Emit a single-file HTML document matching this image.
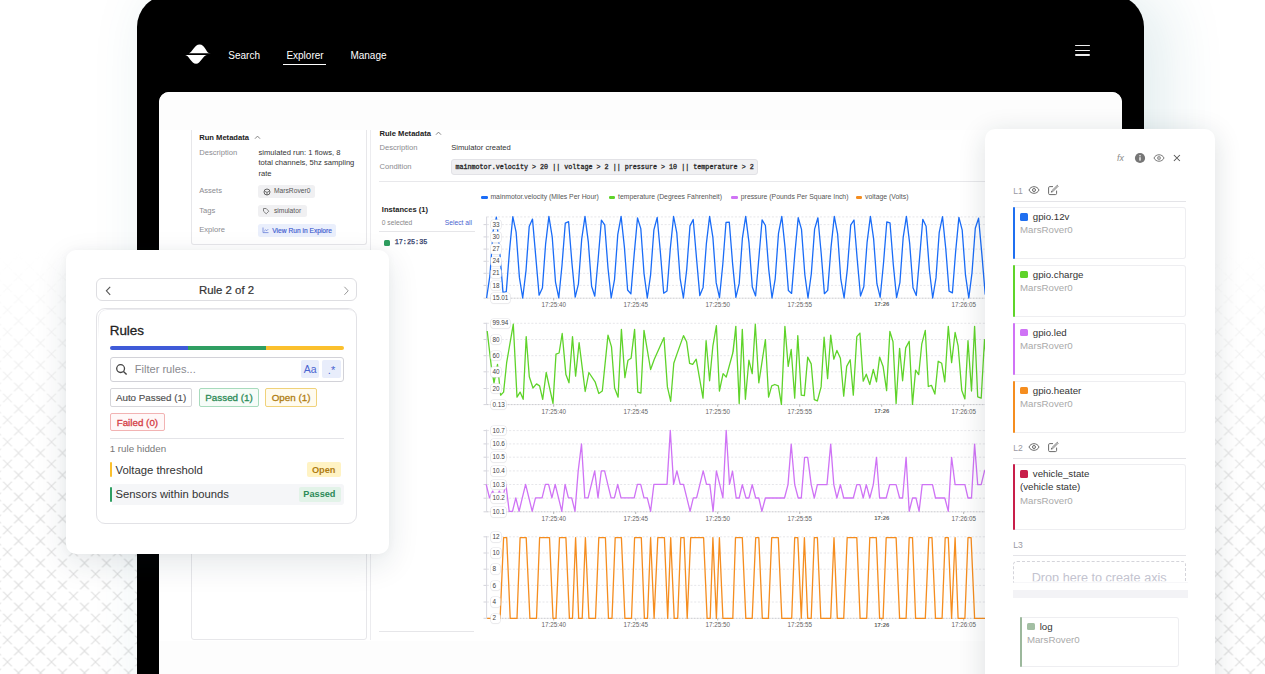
<!DOCTYPE html><html><head><meta charset="utf-8"><style>
html,body{margin:0;padding:0;}
body{width:1265px;height:674px;overflow:hidden;position:relative;background:#fff;font-family:'Liberation Sans',sans-serif;}
.t{position:absolute;white-space:pre;}
.r{position:absolute;box-sizing:border-box;}
svg{position:absolute;overflow:visible;}
</style></head><body>
<svg width="1265" height="674" style="left:0;top:0">
<defs>
<pattern id="xp" x="18.5" y="13" width="22" height="22" patternUnits="userSpaceOnUse">
<g stroke="#e2e2e2" stroke-width="1.25" fill="none">
<path d="M-4.4,-4.4 L4.4,4.4 M-4.4,4.4 L4.4,-4.4"/>
<path d="M17.6,-4.4 L26.4,4.4 M17.6,4.4 L26.4,-4.4"/>
<path d="M-4.4,17.6 L4.4,26.4 M-4.4,26.4 L4.4,17.6"/>
<path d="M17.6,17.6 L26.4,26.4 M17.6,26.4 L26.4,17.6"/>
<path d="M6.6,6.6 L15.4,15.4 M6.6,15.4 L15.4,6.6"/>
</g></pattern>
<linearGradient id="fadeL" x1="0" y1="0" x2="0" y2="1">
<stop offset="0.37" stop-color="#fff" stop-opacity="0"/><stop offset="0.74" stop-color="#fff" stop-opacity="1"/></linearGradient>
<mask id="mk"><rect width="1265" height="674" fill="url(#fadeL)"/></mask>
</defs>
<rect width="1265" height="674" fill="url(#xp)" mask="url(#mk)"/>
</svg>
<div class="r" style="left:137.00px;top:-5.00px;width:1007.00px;height:725.00px;background:#000;border-radius:32px;box-shadow:18px 0 64px rgba(30,115,130,0.14);"></div>
<svg width="30" height="24" style="left:183px;top:42px" viewBox="0 0 30 24">
<path d="M5.8,11.2 C9.2,10.8 11.2,2.4 16.7,2.4 C21.6,2.4 23.4,10.3 25.8,10.9 L27.8,11.2 Z" fill="#fff"/>
<path d="M2.2,13 C5.6,13 8.4,21.8 13.1,21.8 C17.5,21.8 20,13.3 23.8,13 Z" fill="#fff"/>
</svg>
<div class="t" style="left:228.30px;top:50.83px;font-size:10px;line-height:10px;color:#fff;font-weight:400;font-family:'Liberation Sans', sans-serif;">Search</div>
<div class="t" style="left:286.40px;top:50.83px;font-size:10px;line-height:10px;color:#fff;font-weight:400;font-family:'Liberation Sans', sans-serif;">Explorer</div>
<div class="r" style="left:283.00px;top:63.80px;width:42.70px;height:1.20px;background:#fff;"></div>
<div class="t" style="left:350.40px;top:50.83px;font-size:10px;line-height:10px;color:#fff;font-weight:400;font-family:'Liberation Sans', sans-serif;">Manage</div>
<div class="r" style="left:1075.00px;top:44.70px;width:15.00px;height:1.50px;background:#eee;border-radius:1px;"></div>
<div class="r" style="left:1075.00px;top:49.60px;width:15.00px;height:1.50px;background:#eee;border-radius:1px;"></div>
<div class="r" style="left:1075.00px;top:54.30px;width:15.00px;height:1.50px;background:#eee;border-radius:1px;"></div>
<div class="r" style="left:159.00px;top:91.60px;width:963.00px;height:668.40px;background:#fff;border-radius:10px;overflow:hidden;"></div>
<div class="r" style="left:159.00px;top:91.60px;width:963.00px;height:38.60px;background:#fdfdfd;border-radius:10px 10px 0 0;"></div>
<div class="r" style="left:159.00px;top:640.60px;width:963.00px;height:39.40px;background:#fdfdfd;"></div>
<div class="r" style="left:190.50px;top:130.20px;width:176.30px;height:115.30px;border:1px solid #e7e7ea;border-top:none;border-radius:0 0 3px 3px;"></div>
<div class="t" style="left:199.20px;top:133.67px;font-size:7.6px;line-height:7.6px;color:#222;font-weight:700;font-family:'Liberation Sans', sans-serif;">Run Metadata</div>
<svg width="8" height="6" style="left:253.6px;top:133.6px"><path d="M1,4.7 L3.5,2.1 L6,4.7" stroke="#777" stroke-width="0.9" fill="none"/></svg>
<div class="t" style="left:199.20px;top:148.87px;font-size:7.6px;line-height:7.6px;color:#8b8b90;font-weight:400;font-family:'Liberation Sans', sans-serif;">Description</div>
<div class="t" style="left:258.50px;top:148.87px;font-size:7.6px;line-height:7.6px;color:#333;font-weight:400;font-family:'Liberation Sans', sans-serif;">simulated run: 1 flows, 8</div>
<div class="t" style="left:258.50px;top:159.37px;font-size:7.6px;line-height:7.6px;color:#333;font-weight:400;font-family:'Liberation Sans', sans-serif;">total channels, 5hz sampling</div>
<div class="t" style="left:258.50px;top:169.87px;font-size:7.6px;line-height:7.6px;color:#333;font-weight:400;font-family:'Liberation Sans', sans-serif;">rate</div>
<div class="t" style="left:199.20px;top:187.17px;font-size:7.6px;line-height:7.6px;color:#8b8b90;font-weight:400;font-family:'Liberation Sans', sans-serif;">Assets</div>
<div class="t" style="left:199.20px;top:206.67px;font-size:7.6px;line-height:7.6px;color:#8b8b90;font-weight:400;font-family:'Liberation Sans', sans-serif;">Tags</div>
<div class="t" style="left:199.20px;top:226.27px;font-size:7.6px;line-height:7.6px;color:#8b8b90;font-weight:400;font-family:'Liberation Sans', sans-serif;">Explore</div>
<div class="r" style="left:258.20px;top:185.20px;width:56.80px;height:12.40px;background:#f0f0f2;border-radius:2.5px;"></div>
<svg width="8" height="8" style="left:262.6px;top:187.5px"><circle cx="4" cy="4" r="3" stroke="#555" stroke-width="0.9" fill="none"/><path d="M1.6,3.2 L4,4.4 L6.4,3.2 M4,4.4 L4,7" stroke="#555" stroke-width="0.8" fill="none"/></svg>
<div class="t" style="left:274.00px;top:188.33px;font-size:6.7px;line-height:6.7px;color:#555;font-weight:400;font-family:'Liberation Sans', sans-serif;">MarsRover0</div>
<div class="r" style="left:258.20px;top:204.60px;width:48.80px;height:12.60px;background:#f0f0f2;border-radius:2.5px;"></div>
<svg width="8" height="8" style="left:262px;top:207px"><path d="M1.5,1.5 L4.2,1.5 L6.8,4.2 L4.2,6.8 L1.5,4.2 Z" stroke="#666" stroke-width="0.8" fill="none" stroke-linejoin="round"/></svg>
<div class="t" style="left:274.00px;top:207.83px;font-size:6.7px;line-height:6.7px;color:#555;font-weight:400;font-family:'Liberation Sans', sans-serif;">simulator</div>
<div class="r" style="left:258.20px;top:224.20px;width:78.20px;height:12.60px;background:#eaeffc;border-radius:2.5px;"></div>
<svg width="8" height="8" style="left:261.5px;top:226px"><path d="M1,1.5 L1,6.6 L6.5,6.6 M2.2,5.2 L3.6,3.8 L4.6,4.8 L6.2,3.2" stroke="#6a80d8" stroke-width="0.8" fill="none"/></svg>
<div class="t" style="left:272.30px;top:227.97px;font-size:6.65px;line-height:6.65px;color:#3d5bd0;font-weight:400;font-family:'Liberation Sans', sans-serif;-webkit-text-stroke:0.15px #3d5bd0;">View Run in Explore</div>
<div class="r" style="left:190.50px;top:250.00px;width:176.30px;height:390.00px;border:1px solid #e7e7ea;border-radius:3px;"></div>
<div class="r" style="left:370.00px;top:130.20px;width:1.00px;height:509.80px;background:#ececef;"></div>
<div class="t" style="left:379.50px;top:129.87px;font-size:7.6px;line-height:7.6px;color:#222;font-weight:700;font-family:'Liberation Sans', sans-serif;">Rule Metadata</div>
<svg width="8" height="6" style="left:435px;top:129.6px"><path d="M1,4.7 L3.5,2.1 L6,4.7" stroke="#777" stroke-width="0.9" fill="none"/></svg>
<div class="t" style="left:379.50px;top:144.07px;font-size:7.6px;line-height:7.6px;color:#8b8b90;font-weight:400;font-family:'Liberation Sans', sans-serif;">Description</div>
<div class="t" style="left:451.30px;top:144.07px;font-size:7.6px;line-height:7.6px;color:#333;font-weight:400;font-family:'Liberation Sans', sans-serif;">Simulator created</div>
<div class="t" style="left:379.50px;top:163.47px;font-size:7.6px;line-height:7.6px;color:#8b8b90;font-weight:400;font-family:'Liberation Sans', sans-serif;">Condition</div>
<div class="r" style="left:451.30px;top:159.00px;width:306.80px;height:15.80px;background:#f0f0f2;border:1px solid #e2e2e6;border-radius:3px;"></div>
<div class="t" style="left:455.40px;top:164.01px;font-size:6.72px;line-height:6.72px;color:#2a2a2a;font-weight:400;font-family:'Liberation Mono', monospace;-webkit-text-stroke:0.3px #2a2a2a;">mainmotor.velocity &gt; 20 || voltage &gt; 2 || pressure &gt; 10 || temperature &gt; 2</div>
<div class="r" style="left:379.00px;top:181.20px;width:743.00px;height:1.20px;background:#e8e8eb;"></div>
<div class="r" style="left:480.80px;top:196.20px;width:6.80px;height:2.40px;background:#1a6cf7;border-radius:1.2px;"></div>
<div class="t" style="left:490.40px;top:194.10px;font-size:6.85px;line-height:6.85px;color:#555;font-weight:400;font-family:'Liberation Sans', sans-serif;">mainmotor.velocity (Miles Per Hour)</div>
<div class="r" style="left:608.50px;top:196.20px;width:6.80px;height:2.40px;background:#5fd32a;border-radius:1.2px;"></div>
<div class="t" style="left:618.10px;top:194.10px;font-size:6.85px;line-height:6.85px;color:#555;font-weight:400;font-family:'Liberation Sans', sans-serif;">temperature (Degrees Fahrenheit)</div>
<div class="r" style="left:731.20px;top:196.20px;width:6.80px;height:2.40px;background:#cf73f5;border-radius:1.2px;"></div>
<div class="t" style="left:740.80px;top:194.10px;font-size:6.85px;line-height:6.85px;color:#555;font-weight:400;font-family:'Liberation Sans', sans-serif;">pressure (Pounds Per Square Inch)</div>
<div class="r" style="left:855.50px;top:196.20px;width:6.80px;height:2.40px;background:#f58d1f;border-radius:1.2px;"></div>
<div class="t" style="left:865.10px;top:194.10px;font-size:6.85px;line-height:6.85px;color:#555;font-weight:400;font-family:'Liberation Sans', sans-serif;">voltage (Volts)</div>
<div class="t" style="left:381.80px;top:205.90px;font-size:7.56px;line-height:7.56px;color:#222;font-weight:700;font-family:'Liberation Sans', sans-serif;">Instances (1)</div>
<div class="t" style="left:381.80px;top:219.93px;font-size:6.7px;line-height:6.7px;color:#888;font-weight:400;font-family:'Liberation Sans', sans-serif;">0 selected</div>
<div class="t" style="right:793.00px;top:219.93px;font-size:6.7px;line-height:6.7px;color:#4a64d0;font-weight:400;font-family:'Liberation Sans', sans-serif;">Select all</div>
<div class="r" style="left:379.00px;top:231.20px;width:95.50px;height:1.00px;background:#e6e6e9;"></div>
<div class="r" style="left:383.70px;top:239.80px;width:6.30px;height:6.10px;background:#2f9e5f;border-radius:1.5px;"></div>
<div class="t" style="left:394.70px;top:239.45px;font-size:6.8px;line-height:6.8px;color:#2b3866;font-weight:400;font-family:'Liberation Mono', monospace;-webkit-text-stroke:0.25px #2b3866;">17:25:35</div>
<div class="r" style="left:379.40px;top:630.80px;width:95.10px;height:1.00px;background:#e6e6e9;"></div>
<svg width="1265" height="674" style="left:0;top:0"><line x1="487" y1="216.9" x2="1000" y2="216.9" stroke="#e0e0e4" stroke-width="0.8" stroke-dasharray="2,1.7"/><line x1="487" y1="224.6" x2="1000" y2="224.6" stroke="#e0e0e4" stroke-width="0.8" stroke-dasharray="2,1.7"/><line x1="483.5" y1="224.6" x2="486.6" y2="224.6" stroke="#c8c8d0" stroke-width="0.8"/><line x1="487" y1="236.9" x2="1000" y2="236.9" stroke="#e0e0e4" stroke-width="0.8" stroke-dasharray="2,1.7"/><line x1="483.5" y1="236.9" x2="486.6" y2="236.9" stroke="#c8c8d0" stroke-width="0.8"/><line x1="487" y1="249.1" x2="1000" y2="249.1" stroke="#e0e0e4" stroke-width="0.8" stroke-dasharray="2,1.7"/><line x1="483.5" y1="249.1" x2="486.6" y2="249.1" stroke="#c8c8d0" stroke-width="0.8"/><line x1="487" y1="261.3" x2="1000" y2="261.3" stroke="#e0e0e4" stroke-width="0.8" stroke-dasharray="2,1.7"/><line x1="483.5" y1="261.3" x2="486.6" y2="261.3" stroke="#c8c8d0" stroke-width="0.8"/><line x1="487" y1="273.3" x2="1000" y2="273.3" stroke="#e0e0e4" stroke-width="0.8" stroke-dasharray="2,1.7"/><line x1="483.5" y1="273.3" x2="486.6" y2="273.3" stroke="#c8c8d0" stroke-width="0.8"/><line x1="487" y1="285.4" x2="1000" y2="285.4" stroke="#e0e0e4" stroke-width="0.8" stroke-dasharray="2,1.7"/><line x1="483.5" y1="285.4" x2="486.6" y2="285.4" stroke="#c8c8d0" stroke-width="0.8"/><line x1="486.6" y1="298.2" x2="1000" y2="298.2" stroke="#c4c4c8" stroke-width="0.9" stroke-dasharray="2,1"/><line x1="483.5" y1="298.2" x2="486.6" y2="298.2" stroke="#c8c8d0" stroke-width="0.8"/><line x1="486.6" y1="216.6" x2="486.6" y2="298.2" stroke="#d4d4dc" stroke-width="0.9"/><line x1="553.7" y1="298.2" x2="553.7" y2="300.4" stroke="#999" stroke-width="0.7"/><line x1="635.7" y1="298.2" x2="635.7" y2="300.4" stroke="#999" stroke-width="0.7"/><line x1="717.7" y1="298.2" x2="717.7" y2="300.4" stroke="#999" stroke-width="0.7"/><line x1="799.7" y1="298.2" x2="799.7" y2="300.4" stroke="#999" stroke-width="0.7"/><line x1="881.7" y1="298.2" x2="881.7" y2="300.4" stroke="#999" stroke-width="0.7"/><line x1="963.7" y1="298.2" x2="963.7" y2="300.4" stroke="#999" stroke-width="0.7"/><path d="M486.6,298.0 L489.9,275.7 L493.2,230.6 L496.4,217.2 L499.7,251.5 L503.0,292.6 L506.3,291.6 L509.6,249.6 L512.8,216.7 L516.1,232.1 L519.4,277.4 L522.7,298.0 L526.0,270.6 L529.2,226.6 L532.5,219.1 L535.8,257.1 L539.1,295.2 L542.4,288.1 L545.6,244.2 L548.9,216.4 L552.2,236.8 L555.5,282.1 L558.8,297.8 L562.0,265.2 L565.3,223.1 L568.6,221.7 L571.9,262.6 L575.2,297.2 L578.4,284.1 L581.7,239.1 L585.0,216.4 L588.3,241.8 L591.6,286.3 L594.8,296.2 L598.1,259.7 L601.4,220.2 L604.7,224.9 L608.0,268.1 L611.2,298.0 L614.5,279.7 L617.8,234.3 L621.1,216.4 L624.4,247.1 L627.6,290.0 L630.9,293.9 L634.2,254.1 L637.5,218.0 L640.8,228.6 L644.0,273.3 L647.3,298.0 L650.6,274.8 L653.9,229.8 L657.2,217.5 L660.4,252.5 L663.7,293.2 L667.0,291.0 L670.3,248.6 L673.6,216.5 L676.8,232.9 L680.1,278.3 L683.4,298.0 L686.7,269.6 L690.0,225.9 L693.2,219.5 L696.5,258.1 L699.8,295.6 L703.1,287.4 L706.4,243.3 L709.6,216.4 L712.9,237.6 L716.2,282.9 L719.5,297.6 L722.8,264.2 L726.0,222.5 L729.3,222.2 L732.6,263.6 L735.9,297.4 L739.2,283.4 L742.4,238.2 L745.7,216.4 L749.0,242.7 L752.3,287.0 L755.6,295.9 L758.8,258.7 L762.1,219.8 L765.4,225.5 L768.7,269.1 L772.0,298.0 L775.2,278.8 L778.5,233.4 L781.8,216.4 L785.1,248.1 L788.4,290.6 L791.6,293.4 L794.9,253.1 L798.2,217.7 L801.5,229.4 L804.8,274.3 L808.0,298.0 L811.3,273.9 L814.6,229.1 L817.9,217.8 L821.2,253.5 L824.4,293.7 L827.7,290.4 L831.0,247.6 L834.3,216.4 L837.6,233.8 L840.8,279.2 L844.1,298.0 L847.4,268.6 L850.7,225.2 L854.0,220.0 L857.2,259.1 L860.5,296.0 L863.8,286.7 L867.1,242.3 L870.4,216.4 L873.6,238.6 L876.9,283.7 L880.2,297.3 L883.5,263.2 L886.8,222.0 L890.0,222.8 L893.3,264.6 L896.6,297.7 L899.9,282.6 L903.2,237.3 L906.4,216.4 L909.7,243.7 L913.0,287.7 L916.3,295.5 L919.6,257.6 L922.8,219.3 L926.1,226.2 L929.4,270.0 L932.7,298.0 L936.0,277.9 L939.2,232.6 L942.5,216.6 L945.8,249.1 L949.1,291.2 L952.4,292.9 L955.6,252.1 L958.9,217.4 L962.2,230.2 L965.5,275.2 L968.8,298.0 L972.0,272.9 L975.3,228.3 L978.6,218.2 L981.9,254.6 L985.2,294.1 L988.4,289.8 L991.7,246.6 L995.0,216.4 L998.3,234.6" stroke="#1a6cf7" stroke-width="1.3" fill="none" stroke-linejoin="round"/></svg>
<div class="r" style="left:490.90px;top:219.80px;width:10.20px;height:9.60px;background:#fff;border-radius:2.5px;box-shadow:0 0 0 0.6px #e4e4e8,0 0.5px 1.5px rgba(0,0,0,0.10);"></div>
<div class="t" style="left:492.40px;top:221.78px;font-size:6.4px;line-height:6.4px;color:#444;font-weight:400;font-family:'Liberation Sans', sans-serif;">33</div>
<div class="r" style="left:490.90px;top:232.10px;width:10.20px;height:9.60px;background:#fff;border-radius:2.5px;box-shadow:0 0 0 0.6px #e4e4e8,0 0.5px 1.5px rgba(0,0,0,0.10);"></div>
<div class="t" style="left:492.40px;top:234.08px;font-size:6.4px;line-height:6.4px;color:#444;font-weight:400;font-family:'Liberation Sans', sans-serif;">30</div>
<div class="r" style="left:490.90px;top:244.30px;width:10.20px;height:9.60px;background:#fff;border-radius:2.5px;box-shadow:0 0 0 0.6px #e4e4e8,0 0.5px 1.5px rgba(0,0,0,0.10);"></div>
<div class="t" style="left:492.40px;top:246.28px;font-size:6.4px;line-height:6.4px;color:#444;font-weight:400;font-family:'Liberation Sans', sans-serif;">27</div>
<div class="r" style="left:490.90px;top:256.50px;width:10.20px;height:9.60px;background:#fff;border-radius:2.5px;box-shadow:0 0 0 0.6px #e4e4e8,0 0.5px 1.5px rgba(0,0,0,0.10);"></div>
<div class="t" style="left:492.40px;top:258.48px;font-size:6.4px;line-height:6.4px;color:#444;font-weight:400;font-family:'Liberation Sans', sans-serif;">24</div>
<div class="r" style="left:490.90px;top:268.50px;width:10.20px;height:9.60px;background:#fff;border-radius:2.5px;box-shadow:0 0 0 0.6px #e4e4e8,0 0.5px 1.5px rgba(0,0,0,0.10);"></div>
<div class="t" style="left:492.40px;top:270.48px;font-size:6.4px;line-height:6.4px;color:#444;font-weight:400;font-family:'Liberation Sans', sans-serif;">21</div>
<div class="r" style="left:490.90px;top:280.60px;width:10.20px;height:9.60px;background:#fff;border-radius:2.5px;box-shadow:0 0 0 0.6px #e4e4e8,0 0.5px 1.5px rgba(0,0,0,0.10);"></div>
<div class="t" style="left:492.40px;top:282.58px;font-size:6.4px;line-height:6.4px;color:#444;font-weight:400;font-family:'Liberation Sans', sans-serif;">18</div>
<div class="r" style="left:490.90px;top:293.40px;width:18.80px;height:9.60px;background:#fff;border-radius:2.5px;box-shadow:0 0 0 0.6px #e4e4e8,0 0.5px 1.5px rgba(0,0,0,0.10);"></div>
<div class="t" style="left:492.40px;top:295.38px;font-size:6.4px;line-height:6.4px;color:#444;font-weight:400;font-family:'Liberation Sans', sans-serif;">15.01</div>
<div class="t" style="left:353.70px;width:400px;text-align:center;top:301.67px;font-size:6.3px;line-height:6.3px;color:#666;font-weight:400;font-family:'Liberation Sans', sans-serif;">17:25:40</div>
<div class="t" style="left:435.70px;width:400px;text-align:center;top:301.67px;font-size:6.3px;line-height:6.3px;color:#666;font-weight:400;font-family:'Liberation Sans', sans-serif;">17:25:45</div>
<div class="t" style="left:517.70px;width:400px;text-align:center;top:301.67px;font-size:6.3px;line-height:6.3px;color:#666;font-weight:400;font-family:'Liberation Sans', sans-serif;">17:25:50</div>
<div class="t" style="left:599.70px;width:400px;text-align:center;top:301.67px;font-size:6.3px;line-height:6.3px;color:#666;font-weight:400;font-family:'Liberation Sans', sans-serif;">17:25:55</div>
<div class="t" style="left:681.70px;width:400px;text-align:center;top:302.01px;font-size:5.9px;line-height:5.9px;color:#666;font-weight:700;font-family:'Liberation Sans', sans-serif;">17:26</div>
<div class="t" style="left:763.70px;width:400px;text-align:center;top:301.67px;font-size:6.3px;line-height:6.3px;color:#666;font-weight:400;font-family:'Liberation Sans', sans-serif;">17:26:05</div>
<svg width="1265" height="674" style="left:0;top:0"><line x1="487" y1="323.3" x2="1000" y2="323.3" stroke="#e0e0e4" stroke-width="0.8" stroke-dasharray="2,1.7"/><line x1="483.5" y1="323.3" x2="486.6" y2="323.3" stroke="#c8c8d0" stroke-width="0.8"/><line x1="487" y1="339.5" x2="1000" y2="339.5" stroke="#e0e0e4" stroke-width="0.8" stroke-dasharray="2,1.7"/><line x1="483.5" y1="339.5" x2="486.6" y2="339.5" stroke="#c8c8d0" stroke-width="0.8"/><line x1="487" y1="355.7" x2="1000" y2="355.7" stroke="#e0e0e4" stroke-width="0.8" stroke-dasharray="2,1.7"/><line x1="483.5" y1="355.7" x2="486.6" y2="355.7" stroke="#c8c8d0" stroke-width="0.8"/><line x1="487" y1="371.8" x2="1000" y2="371.8" stroke="#e0e0e4" stroke-width="0.8" stroke-dasharray="2,1.7"/><line x1="483.5" y1="371.8" x2="486.6" y2="371.8" stroke="#c8c8d0" stroke-width="0.8"/><line x1="487" y1="388.5" x2="1000" y2="388.5" stroke="#e0e0e4" stroke-width="0.8" stroke-dasharray="2,1.7"/><line x1="483.5" y1="388.5" x2="486.6" y2="388.5" stroke="#c8c8d0" stroke-width="0.8"/><line x1="486.6" y1="404.6" x2="1000" y2="404.6" stroke="#c4c4c8" stroke-width="0.9" stroke-dasharray="2,1"/><line x1="483.5" y1="404.6" x2="486.6" y2="404.6" stroke="#c8c8d0" stroke-width="0.8"/><line x1="486.6" y1="322.8" x2="486.6" y2="404.6" stroke="#d4d4dc" stroke-width="0.9"/><line x1="553.7" y1="404.6" x2="553.7" y2="406.8" stroke="#999" stroke-width="0.7"/><line x1="635.7" y1="404.6" x2="635.7" y2="406.8" stroke="#999" stroke-width="0.7"/><line x1="717.7" y1="404.6" x2="717.7" y2="406.8" stroke="#999" stroke-width="0.7"/><line x1="799.7" y1="404.6" x2="799.7" y2="406.8" stroke="#999" stroke-width="0.7"/><line x1="881.7" y1="404.6" x2="881.7" y2="406.8" stroke="#999" stroke-width="0.7"/><line x1="963.7" y1="404.6" x2="963.7" y2="406.8" stroke="#999" stroke-width="0.7"/><path d="M487.2,331.0 L491.3,366.4 L494.0,382.8 L497.5,364.3 L500.6,395.2 L503.6,392.1 L506.7,362.3 L513.3,324.2 L517.0,397.2 L520.1,392.1 L523.2,399.3 L526.2,336.6 L529.3,376.7 L533.0,388.0 L536.5,383.9 L539.6,385.9 L542.7,399.3 L546.2,372.5 L553.0,403.4 L556.0,354.1 L559.1,353.0 L562.2,333.5 L565.9,374.6 L569.0,382.8 L572.5,336.6 L575.6,376.2 L579.1,342.7 L585.2,391.5 L588.9,372.5 L595.1,381.8 L598.8,393.5 L602.3,391.0 L608.0,335.1 L611.5,346.9 L614.6,388.0 L618.1,397.2 L621.4,329.4 L624.9,377.7 L628.0,360.2 L631.1,358.2 L634.6,329.4 L637.8,392.1 L640.9,393.1 L644.0,330.4 L650.6,369.5 L654.3,359.2 L664.0,337.6 L667.4,386.9 L670.7,401.3 L673.8,363.3 L676.9,354.1 L683.5,335.6 L686.6,341.7 L689.6,363.3 L692.7,364.3 L696.2,359.2 L703.0,398.2 L706.1,340.7 L709.6,380.8 L712.9,345.8 L716.4,325.7 L719.4,391.0 L723.1,373.6 L726.2,377.1 L732.8,353.0 L735.9,326.3 L733.1,352.0 L735.8,326.3 L739.2,403.4 L742.3,329.4 L745.4,399.3 L748.9,360.2 L752.2,373.6 L755.3,324.2 L758.8,382.8 L765.4,339.7 L768.6,397.2 L771.7,385.9 L774.8,384.5 L778.3,385.9 L781.4,404.4 L784.9,326.3 L788.2,366.4 L791.2,349.5 L794.7,398.2 L797.8,335.6 L801.3,395.2 L804.4,395.6 L807.7,357.1 L811.2,363.9 L814.3,399.7 L817.4,400.9 L821.1,386.9 L824.1,337.2 L827.6,378.7 L830.7,335.1 L833.8,359.2 L836.9,350.4 L840.4,358.2 L843.7,396.2 L846.7,366.4 L850.2,359.8 L853.3,395.2 L856.8,336.6 L859.9,333.1 L863.2,381.2 L866.3,374.2 L869.8,384.5 L873.3,369.5 L876.5,381.8 L879.6,357.1 L883.1,366.4 L886.6,390.6 L889.9,331.4 L893.0,341.7 L896.1,403.4 L899.6,348.3 L902.6,380.8 L905.7,347.9 L909.2,341.3 L912.5,404.4 L915.6,370.1 L918.7,374.6 L921.8,343.8 L925.3,330.4 L928.3,386.5 L931.4,385.3 L934.9,394.1 L938.2,361.2 L941.7,363.3 L944.8,381.8 L948.3,326.3 L951.6,362.7 L955.1,332.5 L958.1,345.8 L961.8,390.6 L964.9,398.9 L968.0,340.7 L971.5,391.0 L974.6,326.3 L977.7,396.8 L981.2,398.2 L984.5,339.7 L987.9,376.7" stroke="#5fd32a" stroke-width="1.3" fill="none" stroke-linejoin="round"/></svg>
<div class="r" style="left:490.90px;top:318.50px;width:18.80px;height:9.60px;background:#fff;border-radius:2.5px;box-shadow:0 0 0 0.6px #e4e4e8,0 0.5px 1.5px rgba(0,0,0,0.10);"></div>
<div class="t" style="left:492.40px;top:320.48px;font-size:6.4px;line-height:6.4px;color:#444;font-weight:400;font-family:'Liberation Sans', sans-serif;">99.94</div>
<div class="r" style="left:490.90px;top:334.70px;width:10.20px;height:9.60px;background:#fff;border-radius:2.5px;box-shadow:0 0 0 0.6px #e4e4e8,0 0.5px 1.5px rgba(0,0,0,0.10);"></div>
<div class="t" style="left:492.40px;top:336.68px;font-size:6.4px;line-height:6.4px;color:#444;font-weight:400;font-family:'Liberation Sans', sans-serif;">80</div>
<div class="r" style="left:490.90px;top:350.90px;width:10.20px;height:9.60px;background:#fff;border-radius:2.5px;box-shadow:0 0 0 0.6px #e4e4e8,0 0.5px 1.5px rgba(0,0,0,0.10);"></div>
<div class="t" style="left:492.40px;top:352.88px;font-size:6.4px;line-height:6.4px;color:#444;font-weight:400;font-family:'Liberation Sans', sans-serif;">60</div>
<div class="r" style="left:490.90px;top:367.00px;width:10.20px;height:9.60px;background:#fff;border-radius:2.5px;box-shadow:0 0 0 0.6px #e4e4e8,0 0.5px 1.5px rgba(0,0,0,0.10);"></div>
<div class="t" style="left:492.40px;top:368.98px;font-size:6.4px;line-height:6.4px;color:#444;font-weight:400;font-family:'Liberation Sans', sans-serif;">40</div>
<div class="r" style="left:490.90px;top:383.70px;width:10.20px;height:9.60px;background:#fff;border-radius:2.5px;box-shadow:0 0 0 0.6px #e4e4e8,0 0.5px 1.5px rgba(0,0,0,0.10);"></div>
<div class="t" style="left:492.40px;top:385.68px;font-size:6.4px;line-height:6.4px;color:#444;font-weight:400;font-family:'Liberation Sans', sans-serif;">20</div>
<div class="r" style="left:490.90px;top:399.80px;width:15.40px;height:9.60px;background:#fff;border-radius:2.5px;box-shadow:0 0 0 0.6px #e4e4e8,0 0.5px 1.5px rgba(0,0,0,0.10);"></div>
<div class="t" style="left:492.40px;top:401.78px;font-size:6.4px;line-height:6.4px;color:#444;font-weight:400;font-family:'Liberation Sans', sans-serif;">0.13</div>
<div class="t" style="left:353.70px;width:400px;text-align:center;top:408.77px;font-size:6.3px;line-height:6.3px;color:#666;font-weight:400;font-family:'Liberation Sans', sans-serif;">17:25:40</div>
<div class="t" style="left:435.70px;width:400px;text-align:center;top:408.77px;font-size:6.3px;line-height:6.3px;color:#666;font-weight:400;font-family:'Liberation Sans', sans-serif;">17:25:45</div>
<div class="t" style="left:517.70px;width:400px;text-align:center;top:408.77px;font-size:6.3px;line-height:6.3px;color:#666;font-weight:400;font-family:'Liberation Sans', sans-serif;">17:25:50</div>
<div class="t" style="left:599.70px;width:400px;text-align:center;top:408.77px;font-size:6.3px;line-height:6.3px;color:#666;font-weight:400;font-family:'Liberation Sans', sans-serif;">17:25:55</div>
<div class="t" style="left:681.70px;width:400px;text-align:center;top:409.11px;font-size:5.9px;line-height:5.9px;color:#666;font-weight:700;font-family:'Liberation Sans', sans-serif;">17:26</div>
<div class="t" style="left:763.70px;width:400px;text-align:center;top:408.77px;font-size:6.3px;line-height:6.3px;color:#666;font-weight:400;font-family:'Liberation Sans', sans-serif;">17:26:05</div>
<svg width="1265" height="674" style="left:0;top:0"><line x1="487" y1="430.6" x2="1000" y2="430.6" stroke="#e0e0e4" stroke-width="0.8" stroke-dasharray="2,1.7"/><line x1="483.5" y1="430.6" x2="486.6" y2="430.6" stroke="#c8c8d0" stroke-width="0.8"/><line x1="487" y1="443.9" x2="1000" y2="443.9" stroke="#e0e0e4" stroke-width="0.8" stroke-dasharray="2,1.7"/><line x1="483.5" y1="443.9" x2="486.6" y2="443.9" stroke="#c8c8d0" stroke-width="0.8"/><line x1="487" y1="457.2" x2="1000" y2="457.2" stroke="#e0e0e4" stroke-width="0.8" stroke-dasharray="2,1.7"/><line x1="483.5" y1="457.2" x2="486.6" y2="457.2" stroke="#c8c8d0" stroke-width="0.8"/><line x1="487" y1="470.9" x2="1000" y2="470.9" stroke="#e0e0e4" stroke-width="0.8" stroke-dasharray="2,1.7"/><line x1="483.5" y1="470.9" x2="486.6" y2="470.9" stroke="#c8c8d0" stroke-width="0.8"/><line x1="487" y1="484.5" x2="1000" y2="484.5" stroke="#e0e0e4" stroke-width="0.8" stroke-dasharray="2,1.7"/><line x1="483.5" y1="484.5" x2="486.6" y2="484.5" stroke="#c8c8d0" stroke-width="0.8"/><line x1="487" y1="498.2" x2="1000" y2="498.2" stroke="#e0e0e4" stroke-width="0.8" stroke-dasharray="2,1.7"/><line x1="483.5" y1="498.2" x2="486.6" y2="498.2" stroke="#c8c8d0" stroke-width="0.8"/><line x1="486.6" y1="511.8" x2="1000" y2="511.8" stroke="#c4c4c8" stroke-width="0.9" stroke-dasharray="2,1"/><line x1="483.5" y1="511.8" x2="486.6" y2="511.8" stroke="#c8c8d0" stroke-width="0.8"/><line x1="486.6" y1="429.5" x2="486.6" y2="511.8" stroke="#d4d4dc" stroke-width="0.9"/><line x1="553.7" y1="511.8" x2="553.7" y2="514.0" stroke="#999" stroke-width="0.7"/><line x1="635.7" y1="511.8" x2="635.7" y2="514.0" stroke="#999" stroke-width="0.7"/><line x1="717.7" y1="511.8" x2="717.7" y2="514.0" stroke="#999" stroke-width="0.7"/><line x1="799.7" y1="511.8" x2="799.7" y2="514.0" stroke="#999" stroke-width="0.7"/><line x1="881.7" y1="511.8" x2="881.7" y2="514.0" stroke="#999" stroke-width="0.7"/><line x1="963.7" y1="511.8" x2="963.7" y2="514.0" stroke="#999" stroke-width="0.7"/><path d="M486.2,484.4 L489.5,497.9 L492.7,491.1 L496.0,497.9 L499.3,491.1 L502.6,497.9 L505.9,484.4 L509.2,511.3 L512.5,511.3 L515.8,497.9 L519.1,511.3 L522.3,497.9 L525.6,484.4 L528.9,497.9 L532.2,511.3 L535.5,497.9 L538.8,497.9 L542.1,497.9 L545.4,484.4 L548.6,484.4 L551.9,497.9 L555.2,484.4 L558.5,497.9 L561.8,511.3 L565.1,484.4 L568.4,497.9 L571.7,497.9 L575.0,511.3 L578.2,470.9 L581.5,444.0 L584.8,497.9 L588.1,497.9 L591.4,484.4 L594.7,470.9 L598.0,497.9 L601.3,470.9 L604.6,470.9 L607.8,484.4 L611.1,497.9 L614.4,497.9 L617.7,484.4 L621.0,497.9 L624.3,497.9 L627.6,497.9 L630.9,497.9 L634.2,497.9 L637.4,484.4 L640.7,484.4 L644.0,497.9 L647.3,497.9 L650.6,511.3 L653.9,484.4 L657.2,484.4 L660.5,484.4 L663.7,484.4 L667.0,484.4 L670.3,430.5 L673.6,484.4 L676.9,470.9 L680.2,484.4 L683.5,484.4 L686.8,497.9 L690.1,511.3 L693.3,497.9 L696.6,497.9 L699.9,484.4 L703.2,470.9 L706.5,484.4 L709.8,484.4 L713.1,511.3 L716.4,470.9 L719.7,484.4 L722.9,497.9 L726.2,430.5 L729.5,484.4 L732.5,471.2 L736.2,498.0 L739.2,498.0 L742.3,484.6 L746.0,498.0 L748.9,498.0 L752.2,484.6 L755.7,498.0 L758.8,498.0 L761.9,511.3 L765.4,498.0 L784.5,498.0 L788.0,484.6 L791.2,444.1 L794.7,484.6 L798.2,498.0 L801.3,498.0 L804.6,457.3 L807.7,457.3 L811.2,484.6 L814.3,498.0 L817.4,484.6 L827.0,484.6 L830.7,444.1 L833.8,484.6 L836.9,498.0 L840.4,484.6 L843.7,498.0 L853.3,498.0 L856.8,484.6 L859.9,484.6 L863.2,498.0 L866.3,484.6 L869.8,498.0 L873.3,484.6 L876.5,457.3 L879.6,498.0 L886.2,498.0 L889.7,484.6 L896.1,484.6 L899.6,498.0 L902.6,498.0 L906.1,457.3 L909.2,511.3 L912.5,498.0 L916.0,498.0 L919.1,511.3 L922.2,484.6 L932.5,484.6 L935.5,498.0 L944.8,498.0 L948.3,511.3 L951.6,457.3 L955.1,484.6 L964.9,484.6 L968.0,498.0 L971.5,498.0 L974.6,444.1 L977.7,484.6 L981.2,484.6 L984.5,471.2 L987.9,466.1" stroke="#cf73f5" stroke-width="1.3" fill="none" stroke-linejoin="round"/></svg>
<div class="r" style="left:490.90px;top:425.80px;width:15.40px;height:9.60px;background:#fff;border-radius:2.5px;box-shadow:0 0 0 0.6px #e4e4e8,0 0.5px 1.5px rgba(0,0,0,0.10);"></div>
<div class="t" style="left:492.40px;top:427.78px;font-size:6.4px;line-height:6.4px;color:#444;font-weight:400;font-family:'Liberation Sans', sans-serif;">10.7</div>
<div class="r" style="left:490.90px;top:439.10px;width:15.40px;height:9.60px;background:#fff;border-radius:2.5px;box-shadow:0 0 0 0.6px #e4e4e8,0 0.5px 1.5px rgba(0,0,0,0.10);"></div>
<div class="t" style="left:492.40px;top:441.08px;font-size:6.4px;line-height:6.4px;color:#444;font-weight:400;font-family:'Liberation Sans', sans-serif;">10.6</div>
<div class="r" style="left:490.90px;top:452.40px;width:15.40px;height:9.60px;background:#fff;border-radius:2.5px;box-shadow:0 0 0 0.6px #e4e4e8,0 0.5px 1.5px rgba(0,0,0,0.10);"></div>
<div class="t" style="left:492.40px;top:454.38px;font-size:6.4px;line-height:6.4px;color:#444;font-weight:400;font-family:'Liberation Sans', sans-serif;">10.5</div>
<div class="r" style="left:490.90px;top:466.10px;width:15.40px;height:9.60px;background:#fff;border-radius:2.5px;box-shadow:0 0 0 0.6px #e4e4e8,0 0.5px 1.5px rgba(0,0,0,0.10);"></div>
<div class="t" style="left:492.40px;top:468.08px;font-size:6.4px;line-height:6.4px;color:#444;font-weight:400;font-family:'Liberation Sans', sans-serif;">10.4</div>
<div class="r" style="left:490.90px;top:479.70px;width:15.40px;height:9.60px;background:#fff;border-radius:2.5px;box-shadow:0 0 0 0.6px #e4e4e8,0 0.5px 1.5px rgba(0,0,0,0.10);"></div>
<div class="t" style="left:492.40px;top:481.68px;font-size:6.4px;line-height:6.4px;color:#444;font-weight:400;font-family:'Liberation Sans', sans-serif;">10.3</div>
<div class="r" style="left:490.90px;top:493.40px;width:15.40px;height:9.60px;background:#fff;border-radius:2.5px;box-shadow:0 0 0 0.6px #e4e4e8,0 0.5px 1.5px rgba(0,0,0,0.10);"></div>
<div class="t" style="left:492.40px;top:495.38px;font-size:6.4px;line-height:6.4px;color:#444;font-weight:400;font-family:'Liberation Sans', sans-serif;">10.2</div>
<div class="r" style="left:490.90px;top:507.00px;width:15.40px;height:9.60px;background:#fff;border-radius:2.5px;box-shadow:0 0 0 0.6px #e4e4e8,0 0.5px 1.5px rgba(0,0,0,0.10);"></div>
<div class="t" style="left:492.40px;top:508.98px;font-size:6.4px;line-height:6.4px;color:#444;font-weight:400;font-family:'Liberation Sans', sans-serif;">10.1</div>
<div class="t" style="left:353.70px;width:400px;text-align:center;top:515.57px;font-size:6.3px;line-height:6.3px;color:#666;font-weight:400;font-family:'Liberation Sans', sans-serif;">17:25:40</div>
<div class="t" style="left:435.70px;width:400px;text-align:center;top:515.57px;font-size:6.3px;line-height:6.3px;color:#666;font-weight:400;font-family:'Liberation Sans', sans-serif;">17:25:45</div>
<div class="t" style="left:517.70px;width:400px;text-align:center;top:515.57px;font-size:6.3px;line-height:6.3px;color:#666;font-weight:400;font-family:'Liberation Sans', sans-serif;">17:25:50</div>
<div class="t" style="left:599.70px;width:400px;text-align:center;top:515.57px;font-size:6.3px;line-height:6.3px;color:#666;font-weight:400;font-family:'Liberation Sans', sans-serif;">17:25:55</div>
<div class="t" style="left:681.70px;width:400px;text-align:center;top:515.91px;font-size:5.9px;line-height:5.9px;color:#666;font-weight:700;font-family:'Liberation Sans', sans-serif;">17:26</div>
<div class="t" style="left:763.70px;width:400px;text-align:center;top:515.57px;font-size:6.3px;line-height:6.3px;color:#666;font-weight:400;font-family:'Liberation Sans', sans-serif;">17:26:05</div>
<svg width="1265" height="674" style="left:0;top:0"><line x1="487" y1="536.8" x2="1000" y2="536.8" stroke="#e0e0e4" stroke-width="0.8" stroke-dasharray="2,1.7"/><line x1="483.5" y1="536.8" x2="486.6" y2="536.8" stroke="#c8c8d0" stroke-width="0.8"/><line x1="487" y1="553.0" x2="1000" y2="553.0" stroke="#e0e0e4" stroke-width="0.8" stroke-dasharray="2,1.7"/><line x1="483.5" y1="553.0" x2="486.6" y2="553.0" stroke="#c8c8d0" stroke-width="0.8"/><line x1="487" y1="569.2" x2="1000" y2="569.2" stroke="#e0e0e4" stroke-width="0.8" stroke-dasharray="2,1.7"/><line x1="483.5" y1="569.2" x2="486.6" y2="569.2" stroke="#c8c8d0" stroke-width="0.8"/><line x1="487" y1="585.4" x2="1000" y2="585.4" stroke="#e0e0e4" stroke-width="0.8" stroke-dasharray="2,1.7"/><line x1="483.5" y1="585.4" x2="486.6" y2="585.4" stroke="#c8c8d0" stroke-width="0.8"/><line x1="487" y1="602.0" x2="1000" y2="602.0" stroke="#e0e0e4" stroke-width="0.8" stroke-dasharray="2,1.7"/><line x1="483.5" y1="602.0" x2="486.6" y2="602.0" stroke="#c8c8d0" stroke-width="0.8"/><line x1="486.6" y1="618.3" x2="1000" y2="618.3" stroke="#c4c4c8" stroke-width="0.9" stroke-dasharray="2,1"/><line x1="483.5" y1="618.3" x2="486.6" y2="618.3" stroke="#c8c8d0" stroke-width="0.8"/><line x1="486.6" y1="536.0" x2="486.6" y2="618.3" stroke="#d4d4dc" stroke-width="0.9"/><line x1="553.7" y1="618.3" x2="553.7" y2="620.5" stroke="#999" stroke-width="0.7"/><line x1="635.7" y1="618.3" x2="635.7" y2="620.5" stroke="#999" stroke-width="0.7"/><line x1="717.7" y1="618.3" x2="717.7" y2="620.5" stroke="#999" stroke-width="0.7"/><line x1="799.7" y1="618.3" x2="799.7" y2="620.5" stroke="#999" stroke-width="0.7"/><line x1="881.7" y1="618.3" x2="881.7" y2="620.5" stroke="#999" stroke-width="0.7"/><line x1="963.7" y1="618.3" x2="963.7" y2="620.5" stroke="#999" stroke-width="0.7"/><path d="M487.2,618.4 L500.1,618.4 L503.6,537.6 L506.7,537.6 L510.2,618.4 L517.0,618.4 L520.1,537.6 L526.2,537.6 L529.9,618.4 L536.5,618.4 L539.6,537.6 L549.5,537.6 L553.0,618.4 L556.0,618.4 L559.5,537.6 L565.9,537.6 L569.4,618.4 L572.5,618.4 L575.6,537.6 L578.7,618.4 L582.2,618.4 L585.4,537.6 L588.9,618.4 L595.5,618.4 L598.8,537.6 L605.4,537.6 L608.5,618.4 L612.0,618.4 L615.2,537.6 L621.4,537.6 L624.9,618.4 L631.5,618.4 L634.6,537.6 L641.3,537.6 L644.4,618.4 L647.5,618.4 L650.6,537.6 L654.1,618.4 L657.8,537.6 L664.4,537.6 L667.7,618.4 L670.7,537.6 L674.2,618.4 L677.7,618.4 L680.8,537.6 L684.1,537.6 L687.2,618.4 L690.7,537.6 L703.6,537.6 L707.1,618.4 L710.2,618.4 L712.9,537.6 L716.4,618.4 L719.4,537.6 L722.9,618.4 L732.8,618.4 L735.5,537.6 L742.3,537.6 L745.8,618.4 L752.2,618.4 L755.7,537.6 L758.8,537.6 L762.3,618.4 L768.4,618.4 L771.7,537.6 L778.3,537.6 L781.8,618.4 L791.7,618.4 L794.7,537.6 L797.8,537.6 L801.3,618.4 L804.4,537.6 L807.7,618.4 L811.2,618.4 L814.3,537.6 L817.4,537.6 L820.8,618.4 L830.7,618.4 L834.0,537.6 L837.3,618.4 L843.7,618.4 L847.2,537.6 L856.8,537.6 L860.1,618.4 L866.7,618.4 L869.8,537.6 L876.3,537.6 L879.6,618.4 L883.1,618.4 L886.2,537.6 L896.1,537.6 L899.6,618.4 L906.1,618.4 L909.2,537.6 L912.5,537.6 L915.6,618.4 L925.3,618.4 L928.8,537.6 L932.0,537.6 L935.5,618.4 L942.1,618.4 L945.2,537.6 L948.3,537.6 L951.6,618.4 L955.1,537.6 L958.1,618.4 L964.9,618.4 L968.0,537.6 L971.1,537.6 L974.6,618.4 L989.0,618.4" stroke="#f58d1f" stroke-width="1.3" fill="none" stroke-linejoin="round"/></svg>
<div class="r" style="left:490.90px;top:532.00px;width:10.20px;height:9.60px;background:#fff;border-radius:2.5px;box-shadow:0 0 0 0.6px #e4e4e8,0 0.5px 1.5px rgba(0,0,0,0.10);"></div>
<div class="t" style="left:492.40px;top:533.98px;font-size:6.4px;line-height:6.4px;color:#444;font-weight:400;font-family:'Liberation Sans', sans-serif;">12</div>
<div class="r" style="left:490.90px;top:548.20px;width:10.20px;height:9.60px;background:#fff;border-radius:2.5px;box-shadow:0 0 0 0.6px #e4e4e8,0 0.5px 1.5px rgba(0,0,0,0.10);"></div>
<div class="t" style="left:492.40px;top:550.18px;font-size:6.4px;line-height:6.4px;color:#444;font-weight:400;font-family:'Liberation Sans', sans-serif;">10</div>
<div class="r" style="left:490.90px;top:564.40px;width:9.50px;height:9.60px;background:#fff;border-radius:2.5px;box-shadow:0 0 0 0.6px #e4e4e8,0 0.5px 1.5px rgba(0,0,0,0.10);"></div>
<div class="t" style="left:492.40px;top:566.38px;font-size:6.4px;line-height:6.4px;color:#444;font-weight:400;font-family:'Liberation Sans', sans-serif;">8</div>
<div class="r" style="left:490.90px;top:580.60px;width:9.50px;height:9.60px;background:#fff;border-radius:2.5px;box-shadow:0 0 0 0.6px #e4e4e8,0 0.5px 1.5px rgba(0,0,0,0.10);"></div>
<div class="t" style="left:492.40px;top:582.58px;font-size:6.4px;line-height:6.4px;color:#444;font-weight:400;font-family:'Liberation Sans', sans-serif;">6</div>
<div class="r" style="left:490.90px;top:597.20px;width:9.50px;height:9.60px;background:#fff;border-radius:2.5px;box-shadow:0 0 0 0.6px #e4e4e8,0 0.5px 1.5px rgba(0,0,0,0.10);"></div>
<div class="t" style="left:492.40px;top:599.18px;font-size:6.4px;line-height:6.4px;color:#444;font-weight:400;font-family:'Liberation Sans', sans-serif;">4</div>
<div class="r" style="left:490.90px;top:613.50px;width:9.50px;height:9.60px;background:#fff;border-radius:2.5px;box-shadow:0 0 0 0.6px #e4e4e8,0 0.5px 1.5px rgba(0,0,0,0.10);"></div>
<div class="t" style="left:492.40px;top:615.48px;font-size:6.4px;line-height:6.4px;color:#444;font-weight:400;font-family:'Liberation Sans', sans-serif;">2</div>
<div class="t" style="left:353.70px;width:400px;text-align:center;top:622.37px;font-size:6.3px;line-height:6.3px;color:#666;font-weight:400;font-family:'Liberation Sans', sans-serif;">17:25:40</div>
<div class="t" style="left:435.70px;width:400px;text-align:center;top:622.37px;font-size:6.3px;line-height:6.3px;color:#666;font-weight:400;font-family:'Liberation Sans', sans-serif;">17:25:45</div>
<div class="t" style="left:517.70px;width:400px;text-align:center;top:622.37px;font-size:6.3px;line-height:6.3px;color:#666;font-weight:400;font-family:'Liberation Sans', sans-serif;">17:25:50</div>
<div class="t" style="left:599.70px;width:400px;text-align:center;top:622.37px;font-size:6.3px;line-height:6.3px;color:#666;font-weight:400;font-family:'Liberation Sans', sans-serif;">17:25:55</div>
<div class="t" style="left:681.70px;width:400px;text-align:center;top:622.71px;font-size:5.9px;line-height:5.9px;color:#666;font-weight:700;font-family:'Liberation Sans', sans-serif;">17:26</div>
<div class="t" style="left:763.70px;width:400px;text-align:center;top:622.37px;font-size:6.3px;line-height:6.3px;color:#666;font-weight:400;font-family:'Liberation Sans', sans-serif;">17:26:05</div>
<div class="r" style="left:66.00px;top:250.20px;width:323.00px;height:303.80px;background:#fff;border-radius:10px;box-shadow:0 10px 32px rgba(20,50,60,0.11),0 0 8px rgba(0,0,0,0.04);"></div>
<div class="r" style="left:96.30px;top:278.30px;width:260.40px;height:23.20px;border:1px solid #dedee2;border-radius:6px;background:#fff;"></div>
<svg width="10" height="12" style="left:103.5px;top:284.5px"><path d="M6.2,1.8 L2.4,5.8 L6.2,9.8" stroke="#555" stroke-width="1.1" fill="none"/></svg>
<svg width="10" height="12" style="left:341.5px;top:284.5px"><path d="M2.4,1.8 L6.2,5.8 L2.4,9.8" stroke="#999" stroke-width="1.0" fill="none"/></svg>
<div class="t" style="left:26.50px;width:400px;text-align:center;top:284.95px;font-size:11.4px;line-height:11.4px;color:#333;font-weight:400;font-family:'Liberation Sans', sans-serif;-webkit-text-stroke:0.2px #333;">Rule 2 of 2</div>
<div class="r" style="left:96.30px;top:307.70px;width:260.40px;height:216.80px;border:1px solid #e2e2e6;border-radius:9px;background:#fff;"></div>
<div class="r" style="left:97.60px;top:308.80px;width:259.10px;height:31.20px;border-left:1px solid #e6e6ea;border-top:1px solid #ececf0;border-radius:9px 9px 0 0;-webkit-mask-image:linear-gradient(#000,transparent);"></div>
<div class="t" style="left:109.70px;top:324.01px;font-size:13.45px;line-height:13.45px;color:#222;font-weight:400;font-family:'Liberation Sans', sans-serif;-webkit-text-stroke:0.3px #222;">Rules</div>
<div class="r" style="left:109.70px;top:346.20px;width:234.40px;height:4.00px;background:linear-gradient(90deg,#3f5bd8 0,#3f5bd8 33.3%,#2f9e62 33.3%,#2f9e62 66.6%,#fbc02d 66.6%,#fbc02d 100%);border-radius:2px;"></div>
<div class="r" style="left:109.70px;top:357.20px;width:234.40px;height:24.50px;border:1px solid #d2d2d8;border-radius:3px;background:#fff;"></div>
<svg width="14" height="14" style="left:115px;top:362.5px"><circle cx="5.6" cy="5.6" r="3.9" stroke="#444" stroke-width="1.3" fill="none"/><path d="M8.5,8.5 L11.6,11.6" stroke="#444" stroke-width="1.4"/></svg>
<div class="t" style="left:134.70px;top:364.20px;font-size:11.1px;line-height:11.1px;color:#8a8a90;font-weight:400;font-family:'Liberation Sans', sans-serif;">Filter rules...</div>
<div class="r" style="left:301.00px;top:360.00px;width:18.40px;height:18.40px;background:#e8edfb;border-radius:2px;"></div>
<div class="t" style="left:110.20px;width:400px;text-align:center;top:364.11px;font-size:10.5px;line-height:10.5px;color:#4a64d0;font-weight:400;font-family:'Liberation Sans', sans-serif;">Aa</div>
<div class="r" style="left:322.00px;top:360.00px;width:19.00px;height:18.40px;background:#e8edfb;border-radius:2px;"></div>
<div class="t" style="left:131.50px;width:400px;text-align:center;top:365.19px;font-size:11px;line-height:11px;color:#4a64d0;font-weight:400;font-family:'Liberation Sans', sans-serif;">.*</div>
<div class="r" style="left:109.70px;top:388.40px;width:82.80px;height:18.20px;border:1px solid #d6d6da;border-radius:2px;"></div>
<div class="t" style="left:115.90px;top:392.89px;font-size:9.82px;line-height:9.82px;color:#505050;font-weight:400;font-family:'Liberation Sans', sans-serif;-webkit-text-stroke:0.15px #505050;">Auto Passed (1)</div>
<div class="r" style="left:199.20px;top:388.40px;width:59.70px;height:18.20px;border:1px solid #a8dbbd;border-radius:2px;background:#f6fcf8;"></div>
<div class="t" style="left:29.05px;width:400px;text-align:center;top:392.89px;font-size:9.82px;line-height:9.82px;color:#2b8a57;font-weight:400;font-family:'Liberation Sans', sans-serif;-webkit-text-stroke:0.3px #2b8a57;">Passed (1)</div>
<div class="r" style="left:265.40px;top:388.40px;width:51.30px;height:18.20px;border:1px solid #f0d27a;border-radius:2px;background:#fffbef;"></div>
<div class="t" style="left:91.05px;width:400px;text-align:center;top:392.89px;font-size:9.82px;line-height:9.82px;color:#b07d12;font-weight:400;font-family:'Liberation Sans', sans-serif;-webkit-text-stroke:0.3px #b07d12;">Open (1)</div>
<div class="r" style="left:109.70px;top:413.40px;width:55.40px;height:18.00px;border:1px solid #f2b3b3;border-radius:2px;background:#fff8f8;"></div>
<div class="t" style="left:-62.60px;width:400px;text-align:center;top:417.89px;font-size:9.82px;line-height:9.82px;color:#d43c44;font-weight:400;font-family:'Liberation Sans', sans-serif;-webkit-text-stroke:0.3px #d43c44;">Failed (0)</div>
<div class="r" style="left:109.70px;top:438.00px;width:234.40px;height:1.00px;background:#e4e4e8;"></div>
<div class="t" style="left:109.70px;top:443.83px;font-size:9.77px;line-height:9.77px;color:#777;font-weight:400;font-family:'Liberation Sans', sans-serif;">1 rule hidden</div>
<div class="r" style="left:109.70px;top:461.80px;width:2.50px;height:14.80px;background:#fbc02d;border-radius:1px;"></div>
<div class="t" style="left:115.60px;top:464.73px;font-size:11.3px;line-height:11.3px;color:#333;font-weight:400;font-family:'Liberation Sans', sans-serif;">Voltage threshold</div>
<div class="r" style="left:307.00px;top:461.80px;width:33.90px;height:15.20px;background:#fff3c4;border-radius:2px;"></div>
<div class="t" style="left:123.70px;width:400px;text-align:center;top:465.59px;font-size:9.23px;line-height:9.23px;color:#b07d12;font-weight:700;font-family:'Liberation Sans', sans-serif;">Open</div>
<div class="r" style="left:112.20px;top:483.90px;width:231.40px;height:20.90px;background:#f5f6f8;border-radius:0 3px 3px 0;"></div>
<div class="r" style="left:109.70px;top:486.50px;width:2.50px;height:15.50px;background:#2f9e62;border-radius:1px;"></div>
<div class="t" style="left:115.60px;top:489.08px;font-size:11.25px;line-height:11.25px;color:#333;font-weight:400;font-family:'Liberation Sans', sans-serif;">Sensors within bounds</div>
<div class="r" style="left:298.70px;top:486.50px;width:42.20px;height:15.50px;background:#e2f3e8;border-radius:2px;"></div>
<div class="t" style="left:119.40px;width:400px;text-align:center;top:490.22px;font-size:9.19px;line-height:9.19px;color:#2b8a57;font-weight:700;font-family:'Liberation Sans', sans-serif;">Passed</div>
<div class="r" style="left:985.00px;top:128.80px;width:230.00px;height:631.20px;background:#fff;border-radius:10px;box-shadow:0 5px 28px rgba(20,40,50,0.14);"></div>
<div class="t" style="left:920.40px;width:400px;text-align:center;top:153.55px;font-size:8.8px;line-height:8.8px;color:#8a8a8a;font-weight:400;font-family:'Liberation Sans', sans-serif;font-style:italic;">fx</div>
<svg width="12" height="12" style="left:1134px;top:151.8px"><circle cx="6" cy="6" r="5.1" fill="#767676"/><rect x="5.35" y="5.2" width="1.3" height="3.4" fill="#fff"/><circle cx="6" cy="3.7" r="0.75" fill="#fff"/></svg>
<svg width="12" height="10" style="left:1153px;top:153px"><path d="M1,5 C2.8,0.7 9.2,0.7 11,5 C9.2,9.3 2.8,9.3 1,5 Z" stroke="#777" stroke-width="1" fill="none"/><circle cx="6" cy="5" r="1.6" stroke="#999" stroke-width="0.9" fill="#bbb"/></svg>
<svg width="10" height="10" style="left:1172px;top:153px"><path d="M1.9,2 L7.9,8 M7.9,2 L1.9,8" stroke="#555" stroke-width="1.05"/></svg>
<div class="t" style="left:1013.20px;top:186.72px;font-size:8.6px;line-height:8.6px;color:#9a9aa2;font-weight:400;font-family:'Liberation Sans', sans-serif;">L1</div>
<svg width="12" height="10" style="left:1028.2px;top:185.1px"><path d="M1,5 C2.8,0.6 9.2,0.6 11,5 C9.2,9.4 2.8,9.4 1,5 Z" stroke="#6a6a6a" stroke-width="1" fill="none"/><circle cx="6" cy="5" r="1.5" stroke="#6a6a6a" stroke-width="1" fill="none"/></svg>
<svg width="12" height="12" style="left:1047px;top:185.1px"><path d="M6,1.6 L2.8,1.6 Q1.6,1.6 1.6,2.8 L1.6,8.4 Q1.6,9.6 2.8,9.6 L8.4,9.6 Q9.6,9.6 9.6,8.4 L9.6,5.6" stroke="#6a6a6a" stroke-width="1" fill="none"/><path d="M10.3,0.3 L11.2,1.2 L5.6,6.8 L4.3,7.2 L4.7,5.9 Z" stroke="#6a6a6a" stroke-width="0.9" fill="none" stroke-linejoin="round"/></svg>
<div class="r" style="left:1013.00px;top:201.00px;width:173.00px;height:1.00px;background:#e4e4e8;"></div>
<div class="r" style="left:1013.00px;top:207.20px;width:173.00px;height:52.00px;border:1px solid #eeeef1;border-left:none;border-radius:0 3px 3px 0;background:#fff;"></div>
<div class="r" style="left:1013.00px;top:207.20px;width:1.90px;height:52.00px;background:#1f6ff0;border-radius:1px;"></div>
<div class="r" style="left:1020.00px;top:212.90px;width:8.00px;height:7.70px;background:#1f6ff0;border-radius:1.5px;"></div>
<div class="t" style="left:1032.80px;top:212.39px;font-size:9.7px;line-height:9.7px;color:#333;font-weight:400;font-family:'Liberation Sans', sans-serif;">gpio.12v</div>
<div class="t" style="left:1020.00px;top:225.49px;font-size:9.7px;line-height:9.7px;color:#aaa;font-weight:400;font-family:'Liberation Sans', sans-serif;">MarsRover0</div>
<div class="r" style="left:1013.00px;top:265.00px;width:173.00px;height:52.10px;border:1px solid #eeeef1;border-left:none;border-radius:0 3px 3px 0;background:#fff;"></div>
<div class="r" style="left:1013.00px;top:265.00px;width:1.90px;height:52.10px;background:#5fd32a;border-radius:1px;"></div>
<div class="r" style="left:1020.00px;top:270.70px;width:8.00px;height:7.70px;background:#5fd32a;border-radius:1.5px;"></div>
<div class="t" style="left:1032.80px;top:270.19px;font-size:9.7px;line-height:9.7px;color:#333;font-weight:400;font-family:'Liberation Sans', sans-serif;">gpio.charge</div>
<div class="t" style="left:1020.00px;top:283.29px;font-size:9.7px;line-height:9.7px;color:#aaa;font-weight:400;font-family:'Liberation Sans', sans-serif;">MarsRover0</div>
<div class="r" style="left:1013.00px;top:322.80px;width:173.00px;height:52.10px;border:1px solid #eeeef1;border-left:none;border-radius:0 3px 3px 0;background:#fff;"></div>
<div class="r" style="left:1013.00px;top:322.80px;width:1.90px;height:52.10px;background:#cf73f5;border-radius:1px;"></div>
<div class="r" style="left:1020.00px;top:328.50px;width:8.00px;height:7.70px;background:#cf73f5;border-radius:1.5px;"></div>
<div class="t" style="left:1032.80px;top:327.99px;font-size:9.7px;line-height:9.7px;color:#333;font-weight:400;font-family:'Liberation Sans', sans-serif;">gpio.led</div>
<div class="t" style="left:1020.00px;top:341.09px;font-size:9.7px;line-height:9.7px;color:#aaa;font-weight:400;font-family:'Liberation Sans', sans-serif;">MarsRover0</div>
<div class="r" style="left:1013.00px;top:381.00px;width:173.00px;height:52.40px;border:1px solid #eeeef1;border-left:none;border-radius:0 3px 3px 0;background:#fff;"></div>
<div class="r" style="left:1013.00px;top:381.00px;width:1.90px;height:52.40px;background:#f58d1f;border-radius:1px;"></div>
<div class="r" style="left:1020.00px;top:386.70px;width:8.00px;height:7.70px;background:#f58d1f;border-radius:1.5px;"></div>
<div class="t" style="left:1032.80px;top:386.19px;font-size:9.7px;line-height:9.7px;color:#333;font-weight:400;font-family:'Liberation Sans', sans-serif;">gpio.heater</div>
<div class="t" style="left:1020.00px;top:399.29px;font-size:9.7px;line-height:9.7px;color:#aaa;font-weight:400;font-family:'Liberation Sans', sans-serif;">MarsRover0</div>
<div class="t" style="left:1013.20px;top:443.52px;font-size:8.6px;line-height:8.6px;color:#9a9aa2;font-weight:400;font-family:'Liberation Sans', sans-serif;">L2</div>
<svg width="12" height="10" style="left:1028.2px;top:441.9px"><path d="M1,5 C2.8,0.6 9.2,0.6 11,5 C9.2,9.4 2.8,9.4 1,5 Z" stroke="#6a6a6a" stroke-width="1" fill="none"/><circle cx="6" cy="5" r="1.5" stroke="#6a6a6a" stroke-width="1" fill="none"/></svg>
<svg width="12" height="12" style="left:1047px;top:441.9px"><path d="M6,1.6 L2.8,1.6 Q1.6,1.6 1.6,2.8 L1.6,8.4 Q1.6,9.6 2.8,9.6 L8.4,9.6 Q9.6,9.6 9.6,8.4 L9.6,5.6" stroke="#6a6a6a" stroke-width="1" fill="none"/><path d="M10.3,0.3 L11.2,1.2 L5.6,6.8 L4.3,7.2 L4.7,5.9 Z" stroke="#6a6a6a" stroke-width="0.9" fill="none" stroke-linejoin="round"/></svg>
<div class="r" style="left:1013.00px;top:457.80px;width:173.00px;height:1.00px;background:#e4e4e8;"></div>
<div class="r" style="left:1013.00px;top:464.20px;width:173.00px;height:66.30px;border:1px solid #eeeef1;border-left:none;border-radius:0 3px 3px 0;background:#fff;"></div>
<div class="r" style="left:1013.00px;top:464.20px;width:1.90px;height:66.30px;background:#c81e4a;border-radius:1px;"></div>
<div class="r" style="left:1020.00px;top:469.90px;width:8.00px;height:7.70px;background:#c81e4a;border-radius:1.5px;"></div>
<div class="t" style="left:1032.80px;top:469.39px;font-size:9.7px;line-height:9.7px;color:#333;font-weight:400;font-family:'Liberation Sans', sans-serif;">vehicle_state</div>
<div class="t" style="left:1020.00px;top:482.49px;font-size:9.7px;line-height:9.7px;color:#333;font-weight:400;font-family:'Liberation Sans', sans-serif;">(vehicle state)</div>
<div class="t" style="left:1020.00px;top:495.59px;font-size:9.7px;line-height:9.7px;color:#aaa;font-weight:400;font-family:'Liberation Sans', sans-serif;">MarsRover0</div>
<div class="t" style="left:1013.20px;top:541.12px;font-size:8.6px;line-height:8.6px;color:#9a9aa2;font-weight:400;font-family:'Liberation Sans', sans-serif;">L3</div>
<div class="r" style="left:1013.00px;top:554.80px;width:173.00px;height:1.00px;background:#e4e4e8;"></div>
<div class="r" style="left:1013px;top:561px;width:173px;height:21.5px;overflow:hidden;"><div style="position:absolute;left:0;top:0;width:173px;height:40px;box-sizing:border-box;border:1px dashed #d4d4da;border-radius:4px;"></div></div>
<div class="t" style="left:899.20px;width:400px;text-align:center;top:571.69px;font-size:12.65px;line-height:12.65px;color:#c3c3cf;font-weight:400;font-family:'Liberation Sans', sans-serif;clip-path:inset(0 0 3px 0);">Drop here to create axis</div>
<div class="r" style="left:1013.00px;top:582.50px;width:175.00px;height:7.50px;background:#fff;box-shadow:0 -0.5px 0 #f0f0f3;"></div>
<div class="r" style="left:1013.00px;top:589.80px;width:175.00px;height:8.60px;background:#f3f3f6;"></div>
<div class="r" style="left:1019.90px;top:616.80px;width:159.60px;height:50.70px;border:1px solid #eeeef1;border-left:none;border-radius:0 3px 3px 0;background:#fff;"></div>
<div class="r" style="left:1019.90px;top:616.80px;width:1.90px;height:50.70px;background:#9cb89c;border-radius:1px;"></div>
<div class="r" style="left:1026.90px;top:622.50px;width:8.00px;height:7.70px;background:#a3bfa3;border-radius:1.5px;"></div>
<div class="t" style="left:1039.70px;top:621.99px;font-size:9.7px;line-height:9.7px;color:#333;font-weight:400;font-family:'Liberation Sans', sans-serif;">log</div>
<div class="t" style="left:1026.90px;top:635.09px;font-size:9.7px;line-height:9.7px;color:#aaa;font-weight:400;font-family:'Liberation Sans', sans-serif;">MarsRover0</div>
</body></html>
